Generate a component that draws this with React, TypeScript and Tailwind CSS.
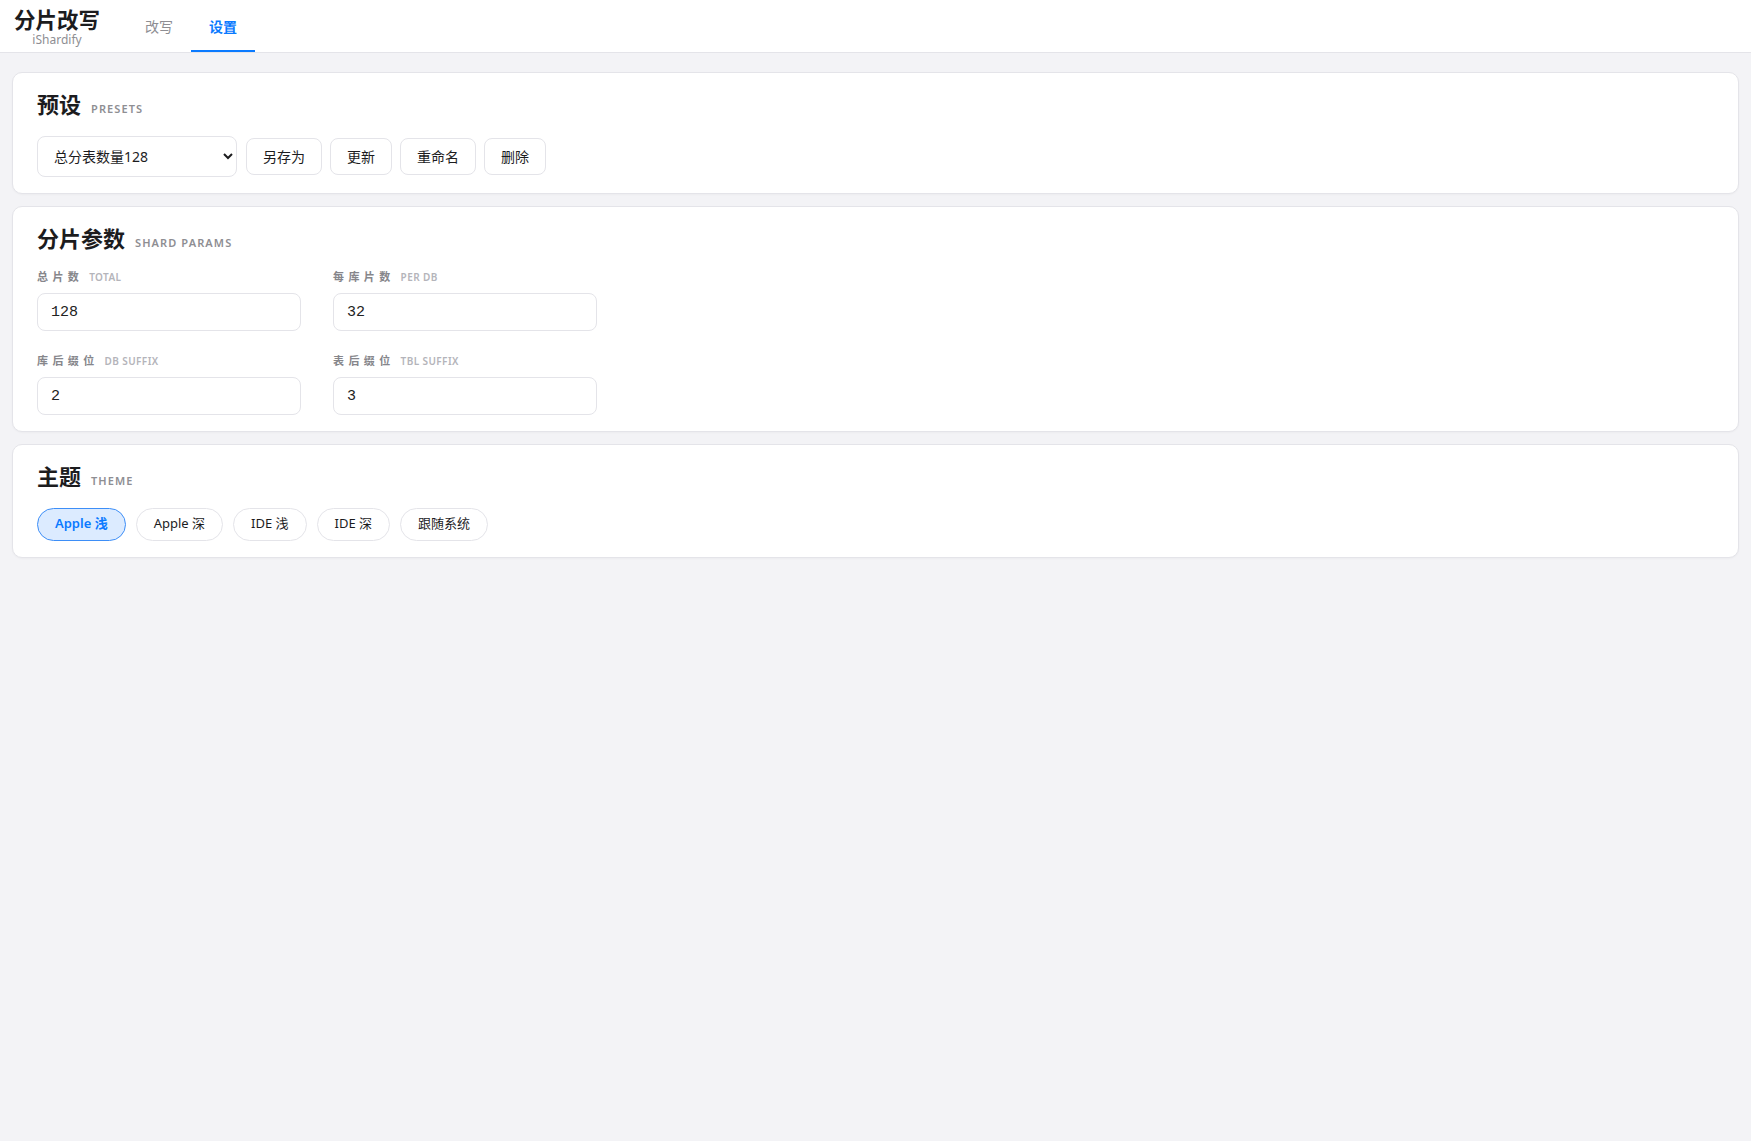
import { useState } from "react";

const FONT = { fontFamily: '"Noto Sans", "Noto Sans CJK SC", sans-serif' };

const presets = ["总分表数量128", "总分表数量64", "总分表数量256"];
const presetActions = ["另存为", "更新", "重命名", "删除"];

const fields = [
  { label: "总片数", en: "TOTAL", value: "128" },
  { label: "每库片数", en: "PER DB", value: "32" },
  { label: "库后缀位", en: "DB SUFFIX", value: "2" },
  { label: "表后缀位", en: "TBL SUFFIX", value: "3" },
];

const themes = ["Apple 浅", "Apple 深", "IDE 浅", "IDE 深", "跟随系统"];

function Card({ title, en, children }: { title: string; en: string; children: React.ReactNode }) {
  return (
    <section className="rounded-[10px] border border-[#e4e4e9] bg-white px-6 pt-5 pb-4 shadow-[0_1px_2px_rgba(0,0,0,0.03)]">
      <div className="mb-[18px] flex items-baseline gap-2.5">
        <h2 className="text-[22px] leading-[23px] font-bold text-[#1c1c1e]">{title}</h2>
        <span className="text-[11px] font-semibold tracking-[0.1em] text-[#8e8e93]">{en}</span>
      </div>
      {children}
    </section>
  );
}

export default function App() {
  const [tab, setTab] = useState("设置");
  const [theme, setTheme] = useState("Apple 浅");

  return (
    <div className="min-h-screen bg-[#f3f3f6]" style={FONT}>
      <header className="flex h-[53px] items-stretch border-b border-[#e4e4e9] bg-white pl-[14px]">
        <div className="flex flex-col items-center justify-center pt-px">
          <span className="text-[21.5px] leading-[26px] font-bold text-[#1c1c1e]">分片改写</span>
          <span className="text-[12px] leading-[13px] text-[#8e8e93]">iShardify</span>
        </div>
        <nav className="ml-[27px] flex">
          {["改写", "设置"].map((t) => (
            <button
              key={t}
              onClick={() => setTab(t)}
              className={
                t === tab
                  ? "flex items-center border-b-2 border-[#0a7aff] px-[18px] pt-[2px] text-[14px] font-semibold text-[#0a7aff]"
                  : "flex items-center border-b-2 border-transparent px-[18px] pt-[2px] text-[14px] text-[#8e8e93]"
              }
            >
              {t}
            </button>
          ))}
        </nav>
      </header>

      <main className="flex flex-col gap-3 px-3 pt-[19px]">
        <Card title="预设" en="PRESETS">
          <div className="flex items-center gap-2">
            <select
              defaultValue={presets[0]}
              className="mr-px h-[41px] w-[200px] rounded-lg border border-[#e4e4e9] bg-white pr-2 pl-3 text-[14px] text-[#1c1c1e]"
              style={FONT}
            >
              {presets.map((p) => (
                <option key={p}>{p}</option>
              ))}
            </select>
            {presetActions.map((a) => (
              <button
                key={a}
                className="h-[37px] rounded-lg border border-[#e4e4e9] bg-white px-4 text-[14px] text-[#1c1c1e]"
              >
                {a}
              </button>
            ))}
          </div>
        </Card>

        <Card title="分片参数" en="SHARD PARAMS">
          <div className="grid w-[560px] grid-cols-2 gap-x-8 gap-y-[22px]">
            {fields.map((f) => (
              <label key={f.label} className="flex flex-col gap-2">
                <span className="flex items-baseline gap-1.5 leading-4">
                  <span className="text-[11px] font-bold tracking-[0.4em] text-[#86868b]">{f.label}</span>
                  <span className="text-[10px] font-semibold tracking-[0.04em] text-[#b4b4ba]">{f.en}</span>
                </span>
                <input
                  defaultValue={f.value}
                  className="h-[38px] rounded-lg border border-[#e4e4e9] bg-white px-[13px] text-[15px] text-[#222] outline-none"
                  style={{ fontFamily: '"Liberation Mono", monospace' }}
                />
              </label>
            ))}
          </div>
        </Card>

        <Card title="主题" en="THEME">
          <div className="flex gap-2.5">
            {themes.map((t) => (
              <button
                key={t}
                onClick={() => setTheme(t)}
                className={
                  t === theme
                    ? "h-[33px] rounded-full border border-[#3d8ef7] bg-[#dcebff] px-[17px] text-[13px] font-semibold text-[#0a7aff]"
                    : "h-[33px] rounded-full border border-[#e4e4e9] bg-white px-[17px] text-[13px] text-[#1c1c1e]"
                }
              >
                {t}
              </button>
            ))}
          </div>
        </Card>
      </main>
    </div>
  );
}
